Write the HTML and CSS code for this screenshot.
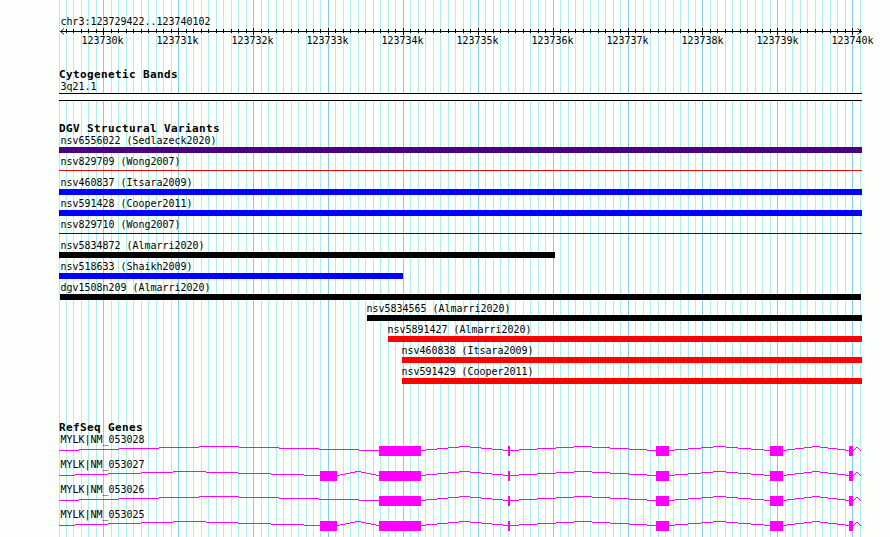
FILE: index.html
```html
<!DOCTYPE html>
<html lang="en">
<head>
<meta charset="utf-8">
<title>chr3:123729422..123740102</title>
<link rel="stylesheet" href="styles.css">
</head>
<body>
<main class="browser">
  <svg class="grid" width="890" height="537" aria-hidden="true"><path id="minor" class="minor"/><path id="major" class="major"/></svg>

  <section class="ruler">
    <div class="region"><span class="label">chr3:123729422..123740102</span></div>
    <svg class="axis" width="890" height="9" aria-hidden="true"><path id="ticks" d="M60 4h802v1h-802z"/><path class="arrow" d="M64 1.500l-3.500 3l3.500 3M857.500 1.500l3.500 3l-3.500 3"/></svg>
    <div class="scale" id="scale"></div>
  </section>

  <section class="track cyto">
    <h2><span>Cytogenetic Bands</span></h2>
    <div class="band-name"><span class="label">3q21.1</span></div>
    <div class="band"></div>
  </section>

  <section class="track variants">
    <h2><span>DGV Structural Variants</span></h2>
    <div class="row"><span class="label">nsv6556022 (Sedlazeck2020)</span><div class="bar indigo"></div></div>
    <div class="row"><span class="label">nsv829709 (Wong2007)</span><div class="bar red thin"></div></div>
    <div class="row"><span class="label">nsv460837 (Itsara2009)</span><div class="bar blue"></div></div>
    <div class="row"><span class="label">nsv591428 (Cooper2011)</span><div class="bar blue"></div></div>
    <div class="row"><span class="label">nsv829710 (Wong2007)</span><div class="bar navy thin"></div></div>
    <div class="row to-555"><span class="label">nsv5834872 (Almarri2020)</span><div class="bar black"></div></div>
    <div class="row to-403"><span class="label">nsv518633 (Shaikh2009)</span><div class="bar blue"></div></div>
    <div class="row"><span class="label">dgv1508n209 (Almarri2020)</span><div class="bar black inset"></div></div>
    <div class="row from-367"><span class="label">nsv5834565 (Almarri2020)</span><div class="bar black"></div></div>
    <div class="row from-388"><span class="label">nsv5891427 (Almarri2020)</span><div class="bar red"></div></div>
    <div class="row from-402"><span class="label">nsv460838 (Itsara2009)</span><div class="bar red"></div></div>
    <div class="row from-402"><span class="label">nsv591429 (Cooper2011)</span><div class="bar red"></div></div>
  </section>

  <section class="track genes">
    <h2><span>RefSeq Genes</span></h2>
    <div class="gene"><span class="label">MYLK|NM_053028</span><svg width="890" height="10" data-exons="379-421 508-510 656-669 770-783 849-853"></svg></div>
    <div class="gene"><span class="label">MYLK|NM_053027</span><svg width="890" height="10" data-exons="320-337 379-421 508-510 656-669 770-783 849-853"></svg></div>
    <div class="gene"><span class="label">MYLK|NM_053026</span><svg width="890" height="10" data-exons="379-421 508-510 656-669 770-783 849-853"></svg></div>
    <div class="gene"><span class="label">MYLK|NM_053025</span><svg width="890" height="10" data-exons="320-337 379-421 508-510 656-669 770-783 849-853"></svg></div>
  </section>
</main>
<script src="main.js"></script>
</body>
</html>
```
FILE: styles.css
```css
* { box-sizing: border-box; }
body { margin: 0; background: #fdfffc; color: #000; }
svg { display: block; shape-rendering: crispEdges; }

.browser {
  position: relative;
  width: 890px;
  height: 537px;
  overflow: hidden;
  padding-top: 13px;
  font-family: "DejaVu Sans Mono", monospace;
}
.grid { position: absolute; left: 0; top: 0; z-index: -1; }
.minor { fill: #afeeee; }
.major { fill: #87ceeb; }

/* 6px-wide cells for labels, 7px-wide cells for headings */
.label {
  display: block;
  width: max-content;
  height: 15px;
  font-size: 11px;
  line-height: 18px;
  white-space: pre;
  transform: translateX(.4px) scaleX(.906);
  transform-origin: 0 0;
}

.region { height: 14px; padding-left: 60px; }
.axis .arrow { fill: none; stroke: #000; stroke-width: .9px; shape-rendering: geometricPrecision; }
.scale {
  display: grid;
  grid-template-columns: repeat(11, 75px);
  height: 15px;
  margin: -4px 0 0 81px;
}

h2 { margin: 0 0 0 59px; height: 12px; font-size: 11px; line-height: 15px; }
h2 span { display: block; width: max-content; white-space: pre; letter-spacing: .378px; }
.variants h2, .genes h2 { line-height: 17px; }

.cyto { margin-top: 20px; }
.band-name { height: 15px; padding-left: 60px; margin-top: -1px; }
.band {
  width: 803px;
  height: 8px;
  margin-left: 59px;
  border: solid #000;
  border-width: 1px 0;
  background: #fdfffc;
}

.variants { margin-top: 19px; }
.row { height: 21px; margin-left: 59px; width: 803px; }
.row .label { margin-left: 1px; }
.to-555 { width: 496px; }
.to-403 { width: 344px; }
.from-367 { margin-left: 367px; width: 495px; }
.from-388 { margin-left: 388px; width: 474px; }
.from-402 { margin-left: 402px; width: 460px; }
.from-367 .label, .from-388 .label, .from-402 .label { margin-left: -1px; }
.bar { height: 6px; }
.bar.thin { height: 1px; position: relative; top: 2px; }
.bar.inset { margin: 0 1px; }
.indigo { background: #4b0082; }
.red { background: #f00; }
.blue { background: #00f; }
.navy { background: #0000cd; }
.black { background: #000; }

.genes { margin-top: 35px; }
.gene { height: 25px; }
.gene .label { margin-left: 60px; }
.gene svg { fill: #f0f; }
```
FILE: main.js
```js
const START = 123729422, END = 123740102, LEFT = 60;
const toX = p => Math.max(59, Math.round(LEFT + (p - START) * 800 / (END - START + 1)));

let minor = '', major = '', ticks = '';
for (let p = 123729400; p <= END; p += 100) {
  const x = toX(p), big = p % 1000 === 0;
  const line = `M${x} 0h1v537h-1z`;
  if (big) major += line; else minor += line;
  if (x > 60) ticks += big ? `M${x} 1h1v7h-1z` : `M${x} 2h1v4h-1z`;
}
document.getElementById('minor').setAttribute('d', minor);
document.getElementById('major').setAttribute('d', major);
const axis = document.getElementById('ticks');
axis.setAttribute('d', axis.getAttribute('d') + ticks);

const scale = document.getElementById('scale');
for (let k = 123730; k <= 123740; k++) {
  const s = document.createElement('span');
  s.className = 'label';
  s.textContent = k + 'k';
  scale.append(s);
}

// Introns rise four pixels to a midpoint and fall back, one pixel per step.
function intron(a, b) {
  let d = '';
  const mid = (a + b) / 2, half = (b - a) / 2;
  for (let x = a; x < b; x++) {
    const y = Math.round(4 * Math.abs(x + .5 - mid) / half);
    d += `M${x} ${y}h1v1h-1z`;
  }
  return d;
}
document.querySelectorAll('[data-exons]').forEach(svg => {
  let pos = 59, d = '';
  svg.dataset.exons.split(' ').forEach(e => {
    const [a, b] = e.split('-').map(Number);
    d += intron(pos, a) + `M${a} 0h${b - a}v10h-${b - a}z`;
    pos = b;
  });
  d += intron(pos, 861);
  const path = document.createElementNS('http://www.w3.org/2000/svg', 'path');
  path.setAttribute('d', d);
  svg.append(path);
});
```
